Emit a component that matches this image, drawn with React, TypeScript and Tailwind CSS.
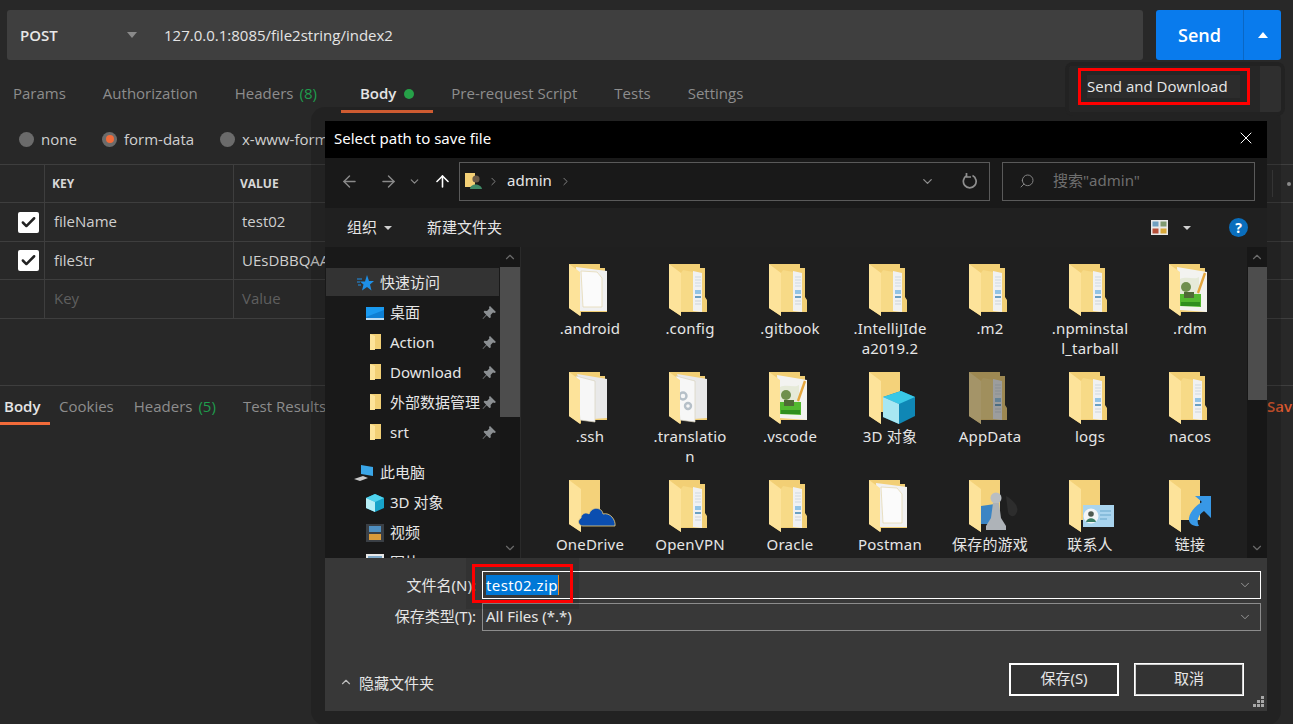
import { ArrowLeft, ArrowRight, ArrowUp, Check, ChevronDown, ChevronRight, ChevronUp, Search, X } from "lucide-react";

type FolderKind = "doc" | "blank" | "pages" | "gears" | "notepad" | "dim" | "cube" | "cloud" | "chess" | "contact" | "link";

const FILES: { name: string; kind: FolderKind }[] = [
  { name: ".android", kind: "blank" },
  { name: ".config", kind: "doc" },
  { name: ".gitbook", kind: "doc" },
  { name: ".IntelliJIdea2019.2", kind: "doc" },
  { name: ".m2", kind: "doc" },
  { name: ".npminstall_tarball", kind: "doc" },
  { name: ".rdm", kind: "notepad" },
  { name: ".ssh", kind: "pages" },
  { name: ".translation", kind: "gears" },
  { name: ".vscode", kind: "notepad" },
  { name: "3D 对象", kind: "cube" },
  { name: "AppData", kind: "dim" },
  { name: "logs", kind: "doc" },
  { name: "nacos", kind: "doc" },
  { name: "OneDrive", kind: "cloud" },
  { name: "OpenVPN", kind: "doc" },
  { name: "Oracle", kind: "doc" },
  { name: "Postman", kind: "blank" },
  { name: "保存的游戏", kind: "chess" },
  { name: "联系人", kind: "contact" },
  { name: "链接", kind: "link" },
];

function DocStrip() {
  return (
    <g>
      <path d="M24 7L33 9V48L24 47Z" fill="#f0f1f2" />
      <path d="M26 13H32M26 16H32M26 19H32M26 22H32" stroke="#cfd9e0" strokeWidth="1" />
      <path d="M26 26H32V30H26Z" fill="#93c4e6" />
      <path d="M26 32H32V34H26Z" fill="#6a9fc2" />
      <path d="M26 37H32M26 40H32" stroke="#cdd3d8" strokeWidth="1" />
    </g>
  );
}

function Notepad() {
  return (
    <g>
      <path d="M8 3L38 8V48L11 46Z" fill="#f3f3f0" />
      <path d="M11 15C18 12 26 16 30 13V30H11Z" fill="#e6ead8" />
      <path d="M11 30H32V43L11 42Z" fill="#52b82f" />
      <path d="M12 38H31V42H12Z" fill="#2f8f1e" />
      <circle cx="17" cy="23" r="5" fill="#6f8f4e" />
      <path d="M15 28H25V34H15Z" fill="#4f6a35" />
      <path d="M36 9L29 29" stroke="#e4a63e" strokeWidth="2.4" />
    </g>
  );
}

function Folder({ kind }: { kind: FolderKind }) {
  const bare = kind === "cube" || kind === "cloud" || kind === "chess" || kind === "contact" || kind === "link";
  return (
    <svg width="60" height="54" viewBox="0 0 60 54" className={kind === "dim" ? "opacity-60" : ""}>
      <g transform="translate(9,0)">
        {bare ? (
          <path d="M0 0H31V40H12V52L0 44Z" fill="#f4d27a" />
        ) : (
          <path d="M0 0H31V4H36V33L38 36V48H12V52L0 44Z" fill="#f2cf75" />
        )}
        {kind === "blank" && (
          <g>
            <path d="M7 3L38 7V47L11 47Z" fill="#f1f1f1" />
            <path d="M12 7L28 8L33 14V43L14 43Z" fill="#fbfbfb" stroke="#e2d5ac" strokeWidth="0.7" />
          </g>
        )}
        {(kind === "pages" || kind === "gears") && (
          <g>
            <path d="M8 2L38 7V46L24 47Z" fill="#e9e9e9" />
            <path d="M7 4L26 9V50L11 48Z" fill="#f7f7f7" stroke="#d8d2bd" strokeWidth="0.7" />
            {kind === "gears" && (
              <g fill="none" stroke="#b6c0c8" strokeWidth="2.4">
                <circle cx="14" cy="24" r="3.5" />
                <circle cx="19" cy="34" r="3" />
              </g>
            )}
          </g>
        )}
        {(kind === "doc" || kind === "dim") && <DocStrip />}
        {kind === "notepad" && <Notepad />}
        {kind !== "blank" && kind !== "pages" && kind !== "gears" && kind !== "notepad" && (
          <path d="M0 0L12 9V52L0 44Z" fill="#fde39a" />
        )}
        {(kind === "blank" || kind === "pages" || kind === "gears" || kind === "notepad") && (
          <path d="M0 0L11 8V52L0 44Z" fill="#fde39a" />
        )}
        {(kind === "doc" || kind === "dim") && <path d="M12 9L14 6L24 8V47H12Z" fill="#f7da87" />}
        {kind === "cube" && (
          <g>
            <path d="M14 25L32 19L46 25V44L30 52L14 45Z" fill="#0f87b5" />
            <path d="M14 25L32 19L46 25L30 32Z" fill="#39c8e6" />
            <path d="M14 25L30 32V52L14 45Z" fill="#a8e7f2" />
          </g>
        )}
        {kind === "cloud" && (
          <path d="M14 46C9 46 8 40 12 38C12 33 18 32 20 34C23 26 33 27 34 34C41 32 47 40 46 46Z" fill="#0b4eb0" stroke="#f4d27a" strokeWidth="0.8" />
        )}
        {kind === "chess" && (
          <g>
            <path d="M12 26L26 24V44H12Z" fill="#3b85c4" />
            <path d="M37 16C44 20 50 26 48 32C46 38 40 37 39 32Z" fill="#2d2d2d" />
            <circle cx="27" cy="18" r="5.5" fill="#b9bec2" />
            <path d="M24 23H30L32 38L37 46V50H17V46L22 38Z" fill="#aeb3b8" />
          </g>
        )}
        {kind === "contact" && (
          <g>
            <path d="M14 25H45V47H14Z" fill="#a9d4ee" />
            <circle cx="22" cy="36" r="7.5" fill="#f3f5f6" />
            <circle cx="22" cy="34" r="2.8" fill="#4f5a50" />
            <path d="M17 42C18 37 26 37 27 42Z" fill="#3b7d66" />
            <path d="M31 31H42M31 35H42M31 39H38" stroke="#7db5d6" strokeWidth="1.4" />
          </g>
        )}
        {kind === "link" && (
          <path d="M42 16V38L35 31C29 35 27 41 30 46C24 47 19 43 20 38C21 31 28 25 33 22L26 16Z" fill="#3898e6" />
        )}
      </g>
    </svg>
  );
}

function FolderMini() {
  return (
    <svg width="14" height="18" viewBox="0 0 14 18">
      <path d="M0 0H11V15H0Z" fill="#f2cf75" />
      <path d="M0 0L5 2V16H0Z" fill="#fde39a" />
    </svg>
  );
}

function PinIcon() {
  return (
    <svg width="14" height="14" viewBox="0 0 14 14">
      <path d="M8 0L14 6L12.6 7L11 6.6L8.6 9L8.8 11.6L7.4 12L4.6 9.2L1 13L0.6 12.6L4.2 8.8L1.6 6L2.4 4.8L5 5L7.4 2.6L7 1Z" fill="#8b8f92" />
    </svg>
  );
}

function SideRow({ label, icon, pinned, selected, gap, top }: { label: string; icon: React.ReactNode; pinned?: boolean; selected?: boolean; gap?: boolean; top?: boolean }) {
  return (
    <div className={`relative flex h-[30px] w-[173px] shrink-0 items-center ${gap ? "mt-[10px]" : ""}`}>
      {selected && <div className="absolute left-0 top-0 h-[28px] w-full bg-[#333333]" />}
      <div className={`relative flex justify-end pr-[6px] ${top ? "w-[54px]" : "w-[64px]"}`}>{icon}</div>
      <span className="relative -mt-[2px] whitespace-nowrap text-[15px] text-[#e6e6e6]">{label}</span>
      {pinned && (
        <div className="absolute left-[156px] top-[8px]">
          <PinIcon />
        </div>
      )}
    </div>
  );
}

function TopTab({ label, count, dot, active }: { label: string; count?: string; dot?: boolean; active?: boolean }) {
  return (
    <div className={`flex h-full items-center px-[18.5px] pt-[17px] border-b-[3px] ${active ? "border-[#f26b3a] ml-[6px]" : "border-transparent"}`}>
      <span className={`text-[15px] whitespace-nowrap ${active ? "font-semibold text-[#e4e4e4]" : "text-[#8d8d8d]"}`}>{label}</span>
      {count && <span className="ml-[6px] text-[15px] text-[#1f9d4d]">{count}</span>}
      {dot && <span className="ml-[8px] h-[10px] w-[10px] rounded-full bg-[#26a148]" />}
    </div>
  );
}

function Radio({ label, on, className }: { label: string; on?: boolean; className: string }) {
  return (
    <div className={`flex items-center gap-[7px] ${className}`}>
      <span className="flex h-[15px] w-[15px] items-center justify-center rounded-full bg-[#6b6b6b]">
        {on && <span className="h-[8px] w-[8px] rounded-full bg-[#f26b3a]" />}
      </span>
      <span className="text-[15px] whitespace-nowrap text-[#d0d0d0]">{label}</span>
    </div>
  );
}

function ParamRow({ name, value, h, placeholder }: { name: string; value: string; h: string; placeholder?: boolean }) {
  return (
    <div className={`flex border-b border-[#3e3e3e] ${h}`}>
      <div className="flex w-[45px] items-center border-r border-[#3e3e3e] pl-[18px]">
        {!placeholder && (
          <span className="flex h-[21px] w-[21px] items-center justify-center rounded-[2px] bg-white">
            <Check size={17} strokeWidth={3.5} className="text-[#222222]" />
          </span>
        )}
      </div>
      <div className={`flex w-[189px] items-center border-r border-[#3e3e3e] pb-[1px] pl-[9px] text-[15px] ${placeholder ? "text-[#5f5f5f]" : "text-[#cfcfcf]"}`}>{name}</div>
      <div className={`flex flex-1 items-center pb-[1px] pl-[8px] text-[15px] ${placeholder ? "text-[#5f5f5f]" : "text-[#cfcfcf]"}`}>{value}</div>
    </div>
  );
}

function SaveDialog() {
  return (
    <div className="flex h-full w-full flex-col font-['Noto_Sans','Noto_Sans_CJK_SC',sans-serif]">
      <div className="flex h-[37px] shrink-0 items-center justify-between bg-black pb-[3px] pl-[9px] pr-[11px]">
        <span className="text-[15px] text-white">Select path to save file</span>
        <X size={20} strokeWidth={1.2} className="text-white" />
      </div>

      <div className="flex h-[50px] shrink-0 items-center bg-[#191919] pb-[4px] pl-[15px] pr-[12px]">
        <ArrowLeft size={19} strokeWidth={1.8} className="text-[#8a8a8a]" />
        <ArrowRight size={19} strokeWidth={1.8} className="ml-[20px] text-[#8a8a8a]" />
        <ChevronDown size={13} strokeWidth={2.2} className="ml-[10px] text-[#8a8a8a]" />
        <ArrowUp size={19} strokeWidth={2} className="ml-[12px] text-white" />
        <div className="ml-[7px] flex h-[39px] w-[531px] items-center border border-[#5a5a5a] pl-[5px]">
          <svg width="17" height="18" viewBox="0 0 17 18">
            <path d="M0 1H10V15H0Z" fill="#f2cf75" />
            <circle cx="11" cy="7" r="3.6" fill="#6a5a48" />
            <path d="M5 17C5 11 16 11 17 17Z" fill="#3f8a66" />
          </svg>
          <ChevronRight size={13} strokeWidth={1.6} className="ml-[5px] text-[#8f8f8f]" />
          <span className="-mt-[2px] ml-[7px] text-[15px] text-[#e6e6e6]">admin</span>
          <ChevronRight size={13} strokeWidth={1.6} className="ml-[7px] text-[#8f8f8f]" />
          <ChevronDown size={15} strokeWidth={2} className="ml-[348px] text-[#8f8f8f]" />
          <svg width="16" height="16" viewBox="0 0 16 16" fill="none" stroke="#8f8f8f" strokeWidth="1.7" className="ml-[27px]">
            <path d="M5 2.6A6.4 6.4 0 1 0 10.5 2.6" />
            <path d="M4.5 0V4H9" />
          </svg>
        </div>
        <div className="ml-[12px] flex h-[39px] flex-1 items-center border border-[#5a5a5a] pl-[16px]">
          <Search size={16} strokeWidth={1.4} className="-scale-x-100 text-[#8a8a8a]" />
          <span className="-mt-[2px] ml-[18px] text-[15px] text-[#6f6f6f]">搜索"admin"</span>
        </div>
      </div>

      <div className="flex h-[39px] shrink-0 items-center bg-[#202020] pl-[22px] pr-[19px]">
        <span className="text-[15px] text-[#e6e6e6]">组织</span>
        <span className="ml-[7px] h-0 w-0 border-x-[4px] border-t-[4px] border-x-transparent border-t-[#cfcfcf]" />
        <span className="ml-[35px] text-[15px] text-[#e6e6e6]">新建文件夹</span>
        <svg width="17" height="15" viewBox="0 0 17 15" className="ml-auto">
          <rect width="17" height="15" fill="#e8e8e8" />
          <rect x="1.5" y="1.5" width="6" height="5" fill="#6f9fc0" />
          <rect x="9.5" y="1.5" width="6" height="5" fill="#7f9a70" />
          <rect x="1.5" y="8.5" width="6" height="5" fill="#b5503a" />
          <rect x="9.5" y="8.5" width="6" height="5" fill="#d8a83a" />
        </svg>
        <span className="ml-[15px] h-0 w-0 border-x-[4px] border-t-[4px] border-x-transparent border-t-[#cfcfcf]" />
        <span className="ml-[38px] flex h-[19px] w-[19px] items-center justify-center rounded-full bg-[#0a6ebd] text-[14px] font-bold text-white">?</span>
      </div>

      <div className="flex h-[311px] shrink-0 overflow-hidden">
        <div className="flex w-[195px] shrink-0 bg-[#191919]">
          <div className="flex w-[175px] flex-col overflow-hidden pt-[21px] pl-[1px]">
            <SideRow
              selected
              top
              label="快速访问"
              icon={
                <svg width="17" height="16" viewBox="0 0 17 16">
                  <path d="M10 0L12 6H17L13 9.5L14.5 15.5L10 12L5 15.5L6.5 9.5L3 6.5H8Z" fill="#1e90e8" />
                  <path d="M0 4H5M0 7H3M1 10H4" stroke="#1e90e8" strokeWidth="1" />
                </svg>
              }
            />
            <SideRow
              pinned
              label="桌面"
              icon={
                <svg width="18" height="13" viewBox="0 0 18 13">
                  <rect width="18" height="13" fill="#1a9af0" />
                  <path d="M0 10L18 3V11H0Z" fill="#0d7fd4" />
                  <rect y="11" width="18" height="2" fill="#bcdcf2" />
                </svg>
              }
            />
            <SideRow pinned label="Action" icon={<FolderMini />} />
            <SideRow pinned label="Download" icon={<FolderMini />} />
            <SideRow pinned label="外部数据管理" icon={<FolderMini />} />
            <SideRow pinned label="srt" icon={<FolderMini />} />
            <SideRow
              gap
              top
              label="此电脑"
              icon={
                <svg width="20" height="18" viewBox="0 0 20 18">
                  <path d="M7 1L19 3V12L7 10Z" fill="#3aa6e8" />
                  <path d="M0 15L9 12L14 14L6 17Z" fill="#c9c9c9" />
                </svg>
              }
            />
            <SideRow
              label="3D 对象"
              icon={
                <svg width="18" height="18" viewBox="0 0 18 18">
                  <path d="M9 0L18 4V14L9 18L0 14V4Z" fill="#17a3c9" />
                  <path d="M9 0L18 4L9 8L0 4Z" fill="#4fd3ee" />
                  <path d="M0 4L9 8V18L0 14Z" fill="#b6eef6" />
                </svg>
              }
            />
            <SideRow
              label="视频"
              icon={
                <svg width="18" height="18" viewBox="0 0 18 18">
                  <rect width="18" height="18" fill="#3a3f45" />
                  <rect x="3" y="2" width="12" height="6" fill="#4f8fc0" />
                  <rect x="3" y="10" width="12" height="6" fill="#d99b3a" />
                </svg>
              }
            />
            <SideRow
              label="图片"
              icon={
                <svg width="18" height="18" viewBox="0 0 18 18">
                  <rect width="18" height="18" fill="#e8e8e8" />
                  <rect x="2" y="2" width="14" height="12" fill="#7fa9c9" />
                </svg>
              }
            />
          </div>
          <div className="flex w-[20px] flex-col items-center bg-[#171717]">
            <div className="flex h-[20px] items-center">
              <ChevronUp size={14} strokeWidth={2} className="text-[#6a6a6a]" />
            </div>
            <div className="h-[150px] w-full bg-[#4d4d4d]" />
            <div className="mt-auto flex h-[20px] items-center">
              <ChevronDown size={14} strokeWidth={2} className="text-[#6a6a6a]" />
            </div>
          </div>
        </div>

        <div className="flex-1 overflow-hidden border-l border-[#2a2a2a] bg-[#1f1f1f]">
          <div className="grid grid-cols-[repeat(7,100px)] auto-rows-[108px] pl-[19px] pt-[17px]">
            {FILES.map((f) => (
              <div key={f.name} className="flex flex-col items-center">
                <Folder kind={f.kind} />
                <span className="w-[78px] break-all text-center text-[15px] leading-[20px] tracking-[0.2px] text-[#e6e6e6]">{f.name}</span>
              </div>
            ))}
          </div>
        </div>

        <div className="flex w-[20px] shrink-0 flex-col items-center bg-[#171717]">
          <div className="flex h-[20px] items-center">
            <ChevronUp size={14} strokeWidth={2} className="text-[#6a6a6a]" />
          </div>
          <div className="h-[133px] w-[19px] bg-[#4d4d4d]" />
          <div className="mt-auto flex h-[20px] items-center">
            <ChevronDown size={14} strokeWidth={2} className="text-[#6a6a6a]" />
          </div>
        </div>
      </div>

      <div className="relative flex min-h-0 flex-1 flex-col bg-[#383838] pt-[13px] pr-[6px]">
        <div className="flex h-[28px] items-center">
          <span className="w-[151px] text-right text-[15px] text-[#e6e6e6]">文件名(N):</span>
          <div className="ml-[6px] flex h-[28px] flex-1 items-center border border-white pl-[3px] pr-[8px]">
            <span className="h-[20px] border-r border-[#f28a1c] bg-[#0078d7] text-[15px] leading-[20px] tracking-[0.4px] text-white">test02.zip</span>
            <ChevronDown size={14} strokeWidth={1.2} className="ml-auto text-[#bdbdbd]" />
          </div>
        </div>
        <div className="mt-[4px] flex h-[28px] items-center">
          <span className="-mt-[2px] w-[151px] text-right text-[15px] text-[#e6e6e6]">保存类型(T):</span>
          <div className="ml-[6px] flex h-[28px] flex-1 items-center border border-[#8c8c8c] pl-[3px] pr-[8px]">
            <span className="-mt-[2px] text-[15px] text-[#e6e6e6]">All Files (*.*)</span>
            <ChevronDown size={14} strokeWidth={1.2} className="ml-auto text-[#bdbdbd]" />
          </div>
        </div>
        <div className="mt-[32px] flex items-center pl-[14px] pr-[17px]">
          <ChevronUp size={14} strokeWidth={2} className="mt-[4px] text-[#bdbdbd]" />
          <span className="ml-[6px] mt-[8px] text-[15px] text-[#e6e6e6]">隐藏文件夹</span>
          <button className="ml-auto h-[33px] w-[110px] border-2 border-white bg-[#333333] pb-[2px] text-[15px] text-[#e6e6e6]">保存(S)</button>
          <button className="ml-[15px] h-[33px] w-[110px] border-2 border-[#d0d0d0] bg-[#333333] pb-[2px] text-[15px] text-[#e6e6e6] outline outline-1 -outline-offset-1 outline-white">取消</button>
        </div>
        <svg width="12" height="12" viewBox="0 0 12 12" className="absolute bottom-[3px] right-[3px]">
          <path d="M9 0h3v3H9zM5 4h3v3H5zM9 4h3v3H9zM1 8h3v3H1zM5 8h3v3H5zM9 8h3v3H9z" fill="#a8a8a8" />
        </svg>
      </div>
    </div>
  );
}

export default function App() {
  return (
    <div className="relative h-[724px] w-[1293px] overflow-hidden bg-[#282828] font-['Open_Sans','Noto_Sans_CJK_SC',sans-serif]">
      <div className="flex h-[60px] items-end pl-[7px] pr-[12px]">
        <div className="flex h-[50px] flex-1 items-center rounded-[3px] bg-[#3f3f3f]">
          <span className="ml-[13px] w-[107px] text-[15px] font-semibold text-[#e8e8e8]">POST</span>
          <span className="h-0 w-0 border-x-[5px] border-t-[6px] border-x-transparent border-t-[#8a8a8a]" />
          <span className="ml-[27px] text-[15px] text-[#e4e4e4]">127.0.0.1:8085/file2string/index2</span>
        </div>
        <div className="ml-[13px] flex h-[50px] w-[125px] overflow-hidden rounded-[3px] bg-[#097bed]">
          <div className="flex w-[88px] items-center justify-center border-r border-[#0a67c4] text-[18px] font-semibold text-white">Send</div>
          <div className="flex flex-1 items-center justify-center">
            <span className="h-0 w-0 border-x-[5px] border-b-[6px] border-x-transparent border-b-white" />
          </div>
        </div>
      </div>

      <div className="-ml-[5.5px] flex h-[53px]">
        <TopTab label="Params" />
        <TopTab label="Authorization" />
        <TopTab label="Headers" count="(8)" />
        <TopTab label="Body" dot active />
        <TopTab label="Pre-request Script" />
        <TopTab label="Tests" />
        <TopTab label="Settings" />
      </div>

      <div className="flex h-[51px] items-center pl-[19px] pt-[1px]">
        <Radio label="none" className="w-[83px]" />
        <Radio on label="form-data" className="w-[118px]" />
        <Radio label="x-www-form-urlencoded" className="w-[200px]" />
      </div>

      <div className="border-t border-[#3e3e3e]">
        <div className="flex h-[38px] border-b border-[#3e3e3e]">
          <div className="w-[45px] border-r border-[#3e3e3e]" />
          <div className="flex w-[189px] items-center border-r border-[#3e3e3e] pl-[7px] text-[12px] font-bold text-[#d8d8d8]">KEY</div>
          <div className="flex flex-1 items-center pl-[6px] text-[12px] font-bold text-[#d8d8d8]">VALUE</div>
          <div className="my-[5px] flex w-[21px] items-center border-l border-[#3e3e3e] pl-[14px]">
            <span className="h-[4px] w-[4px] rounded-full bg-[#8a8a8a]" />
          </div>
        </div>
        <ParamRow name="fileName" value="test02" h="h-[39px]" />
        <ParamRow name="fileStr" value="UEsDBBQAAAAIAA" h="h-[38px]" />
        <ParamRow name="Key" value="Value" h="h-[39px]" placeholder />
      </div>

      <div className="mt-[66px] flex h-[40px] items-end border-t border-[#3e3e3e]">
        <div className="flex h-full w-[50px] items-center border-b-[3px] border-[#f26b3a] pl-[4px] pt-[5px] text-[15px] font-semibold text-[#e4e4e4]">Body</div>
        <div className="ml-[9px] flex h-full items-center pt-[1px] text-[15px] text-[#8d8d8d]">Cookies</div>
        <div className="ml-[20px] flex h-full items-center pt-[1px] text-[15px] text-[#8d8d8d]">
          Headers<span className="ml-[6px] text-[#1f9d4d]">(5)</span>
        </div>
        <div className="ml-[27px] flex h-full items-center pt-[1px] text-[15px] whitespace-nowrap text-[#8d8d8d]">Test Results</div>
        <div className="ml-auto flex h-full w-[26px] items-center overflow-hidden pt-[1px] text-[15px] font-semibold whitespace-nowrap text-[#d9582f]">Save Response</div>
      </div>

      {/* dialog halo + window */}
      <div className="absolute left-[311px] top-[107px] h-[618px] w-[970px] rounded-[14px] bg-black/15 p-[14px]">
        <SaveDialog />
      </div>
      <div className="absolute left-[472px] top-[564px] h-[39px] w-[101px] border-[3px] border-[#ff0000] shadow-[0_0_0_6px_rgba(0,0,0,0.1)]" />

      {/* send dropdown */}
      <div className="absolute left-[1065px] top-[62px] flex h-[54px] w-[220px] rounded-[8px] bg-[#222222] p-[4px]">
        <div className="flex h-[46px] flex-1 overflow-hidden rounded-[3px] bg-[#2f2f2f]">
          <div className="h-full w-[191px] bg-[#262626]" />
        </div>
      </div>
      <div className="absolute left-[1078px] top-[68px] flex h-[37px] w-[172px] items-center border-[3px] border-[#ff0000] pl-[6px]">
        <span className="whitespace-nowrap bg-[#2c2c2c] pr-[12px] text-[15px] text-[#e8e8e8]">Send and Download</span>
      </div>
    </div>
  );
}
